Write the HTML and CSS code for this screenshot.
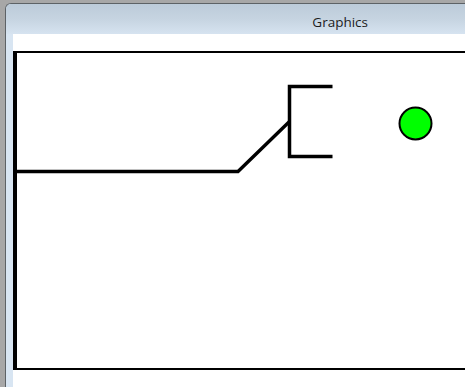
FILE: index.html
```html
<!DOCTYPE html>
<html lang="en">
<head>
    <meta charset="UTF-8">
    <title>Graphics</title>
    <link rel="stylesheet" href="styles.css">
</head>
<body>
    <div class="window">
        <div class="title-bar">
            <span class="title">Graphics</span>
        </div>
        <div class="frame">
            <div class="client">
                <svg class="canvas" width="452" height="350" viewBox="0 0 452 350">
                    <!-- panel outline -->
                    <rect x="0" y="17" width="4" height="319" fill="#000"/>
                    <rect x="0" y="17" width="452" height="2" fill="#000"/>
                    <rect x="0" y="334" width="452" height="2" fill="#000"/>
                    <!-- switch -->
                    <path d="M4 137.5 H225 L276.5 87.5" fill="none" stroke="#000" stroke-width="3.4"/>
                    <path d="M319.5 52.5 H276.5 V122.5 H319.5" fill="none" stroke="#000" stroke-width="3.5" stroke-linejoin="miter"/>
                    <!-- lamp -->
                    <circle cx="402.5" cy="89.5" r="16" fill="#00ff00" stroke="#000" stroke-width="2"/>
                </svg>
            </div>
        </div>
    </div>
</body>
</html>
```

FILE: styles.css
```css
html, body {
    margin: 0;
    padding: 0;
    overflow: hidden;
}

body {
    background: #a7a7a7;
    width: 465px;
    height: 387px;
    font-family: 'Open Sans', 'Noto Sans', sans-serif;
}

.window {
    margin: 3px 0 0 5px;
    height: 384px;
    box-sizing: border-box;
    border-top: 1px solid #5d6266;
    border-left: 1px solid #5d6266;
    border-radius: 6px 0 0 0;
    background: #d8e5f2;
    display: flex;
    flex-direction: column;
}

.title-bar {
    height: 30px;
    flex: none;
    display: flex;
    align-items: center;
    justify-content: flex-end;
    padding-right: 97px;
    background: linear-gradient(to bottom, #bccbd9 0%, #c6d4e1 50%, #d6e3f0 100%);
    border-radius: 5px 0 0 0;
}

.title {
    font-size: 13.5px;
    color: #1c1c1c;
    padding-top: 6px;
}

.frame {
    flex: 1;
    min-height: 0;
    padding-left: 7px;
    display: flex;
}

.client {
    flex: 1;
    background: #fff;
    overflow: hidden;
}

.canvas {
    display: block;
}
```
